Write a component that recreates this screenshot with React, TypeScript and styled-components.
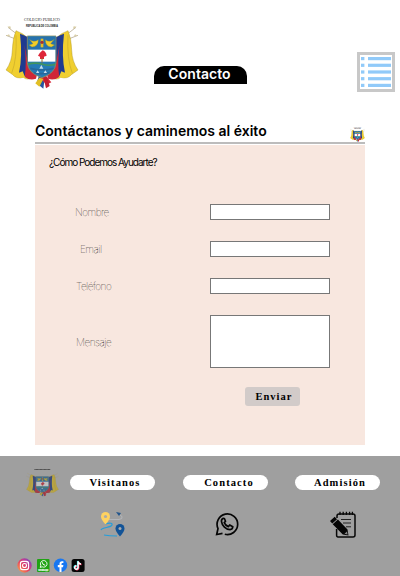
import React from 'react';
import styled, { createGlobalStyle } from 'styled-components';

const GlobalStyle = createGlobalStyle`
  * { box-sizing: border-box; }
  body { margin: 0; background: #fff; font-family: Inter, sans-serif; color: #000; }
`;

const Page = styled.div`
  width: 400px;
  height: 576px;
  display: flex;
  flex-direction: column;
  overflow: hidden;
`;

const Header = styled.header`
  height: 120px;
  display: flex;
  align-items: flex-start;
  padding: 16px 5px 0;
`;

const HeaderTab = styled.h1`
  width: 93px;
  height: 18px;
  margin: 50px 0 0 75px;
  background: #000;
  color: #fff;
  border-radius: 10px 10px 0 0;
  font-size: 14px;
  font-weight: 600;
  line-height: 16px;
  text-align: center;
  padding-right: 2px;
  letter-spacing: 0.05px;
`;

const MenuButton = styled.button`
  width: 38px;
  height: 40px;
  margin: 36px 0 0 auto;
  padding: 2px 1px;
  border: 3px solid #c8c8c8;
  background: #fff;
  display: flex;
`;

const Main = styled.main`
  width: 330px;
  margin: 0 35px;
  height: 336px;
`;

const TitleBar = styled.div`
  height: 24px;
  display: flex;
  align-items: flex-start;
  justify-content: space-between;
  border-bottom: 2px solid #bcbcbc;
`;

const Title = styled.h2`
  margin: 2px 0 0;
  font-size: 14px;
  line-height: 17px;
  font-weight: 600;
  white-space: nowrap;
`;

const TitleCrest = styled.div`
  display: flex;
  height: 15px;
  margin-top: 7px;
`;

const Panel = styled.form`
  height: 300px;
  margin-top: 1px;
  padding: 10px 35px 0 14px;
  background: #f8e7df;
`;

const Question = styled.p`
  margin: 0 0 32px;
  font-size: 10px;
  line-height: 15px;
  height: 17px;
  letter-spacing: -1px;
  white-space: nowrap;
`;

const Field = styled.label<{ $tall?: boolean }>`
  display: flex;
  align-items: center;
  justify-content: space-between;
  height: ${p => (p.$tall ? 53 : 16)}px;
  margin: ${p => (p.$tall ? '0' : '0 0 21px')};
`;

const FieldName = styled.span<{ $indent: number }>`
  margin-left: ${p => p.$indent}px;
  font-size: 10px;
  font-weight: 100;
  line-height: 12px;
  letter-spacing: -0.5px;
  color: #000;
`;

const Input = styled.input`
  width: 120px;
  height: 16px;
  border: 1px solid #777;
  background: #fff;
  padding: 0 3px;
`;

const TextArea = styled.textarea`
  width: 120px;
  height: 53px;
  border: 1px solid #777;
  background: #fff;
  resize: none;
  display: block;
`;

const SubmitButton = styled.button`
  display: block;
  width: 55px;
  height: 19px;
  margin: 19px 30px 0 auto;
  padding: 0 0 0 3px;
  border: 0;
  border-radius: 3px;
  background: #d2cbc9;
  color: #000;
  font: bold 10.5px/19px 'Liberation Serif', serif;
  letter-spacing: 1px;
`;

const Footer = styled.footer`
  height: 120px;
  background: #9f9f9f;
  padding: 13px 20px 0 26px;
`;

const FooterRow = styled.div`
  display: flex;
  align-items: flex-start;
  height: 76px;
`;

const FooterCrest = styled.div`
  display: flex;
  width: 44px;
  opacity: 0.75;
  filter: brightness(0.8);
`;

const Links = styled.nav`
  flex: 1;
  display: flex;
  justify-content: space-between;
  padding-top: 6px;
`;

const LinkGroup = styled.div`
  display: flex;
  flex-direction: column;
  align-items: center;
  gap: 20px;
`;

const Pill = styled.a<{ $offset?: number }>`
  width: 85px;
  height: 15px;
  padding-left: ${p => p.$offset ?? 5}px;
  border-radius: 8px;
  background: #fff;
  font: bold 10.5px/15px 'Liberation Serif', serif;
  letter-spacing: 1.1px;
  text-align: center;
`;

const IconSlot = styled.div<{ $shift: number }>`
  display: flex;
  align-items: center;
  justify-content: center;
  height: 28px;
  margin-left: ${p => p.$shift}px;
`;

const Social = styled.div`
  display: flex;
  gap: 3px;
  margin: 13px 0 0 -9px;
`;

function Crest({ width, height, caption = true }: { width: number; height: number; caption?: boolean }) {
  return (
    <svg width={width} height={height} viewBox="15 18 222 222" preserveAspectRatio="none">
      {caption ? (
        <g fontFamily="Liberation Serif, serif" textAnchor="middle" fill="#222">
          <text x="126" y="32" fontSize="12" textLength="108">COLEGIO PUBLICO</text>
          <text x="126" y="50" fontSize="12" fontFamily="Liberation Sans, sans-serif" fontWeight="bold" textLength="96" lengthAdjust="spacingAndGlyphs">REPUBLICA DE COLOMBIA</text>
        </g>
      ) : (
        <path d="M72 22h108" stroke="#333" strokeWidth="8" strokeDasharray="7 2" />
      )}
      <path d="M24 52L84 98M18 76L60 92M228 52L168 98M234 76L192 92" stroke="#b9ae94" strokeWidth="2.5" fill="none" />
      <path d="M18 77l9-4 3 5zM22 50l9-1 2 8zM234 77l-9-4-3 5zM230 50l-9-1-2 8z" fill="#d9cda4" />
      <path d="M48 62Q66 68 84 84L100 203Q80 212 70 202Q50 208 38 194L18 180Q36 155 37 120Q38 85 48 62z" fill="#f0cf30" stroke="#a58d25" strokeWidth="1.2" />
      <path d="M204 62Q186 68 168 84L152 203Q172 212 182 202Q202 208 214 194L234 180Q216 155 215 120Q214 85 204 62z" fill="#f0cf30" stroke="#a58d25" strokeWidth="1.2" />
      <path d="M48 76Q52 145 35 190M204 76Q200 145 217 190" stroke="#c9aa2b" strokeWidth="2" fill="none" />
      <path d="M60 71Q74 76 84 82L100 190 98 206Q74 205 57 188Q68 140 60 71zM192 71Q178 76 168 82L152 190 154 206Q178 205 195 188Q184 140 192 71z" fill="#1f3b90" />
      <path d="M73 104L84 160 112 190 108 206Q90 213 74 200Q81 160 73 104zM179 104L168 160 140 190 144 206Q162 213 178 200Q171 160 179 104z" fill="#cf2637" />
      <path d="M40 188Q58 190 68 184L75 201Q58 207 40 196zM212 188Q194 190 184 184L177 201Q194 207 212 196z" fill="#f0cf30" />
      <path d="M118 193L110 220 130 236 135 197z" fill="#2755a1" />
      <path d="M134 193L154 217 140 224 120 204z" fill="#d92839" />
      <path d="M130 201L138 235 149 228 141 200z" fill="#c31f30" />
      <path d="M118 203l-12 17 12 10 12-23z" fill="#e2bf24" />
      <path d="M82 78H168V158Q166 190 126 203Q84 190 82 158z" fill="#267bb6" stroke="#8b9261" strokeWidth="2.5" />
      <path d="M84 80H166V118H84z" fill="#2672ad" />
      <path d="M88 88Q101 99 115 89Q115 109 96 111L87 105 99 101zM163 88Q150 99 136 89Q136 109 154 111L164 105 152 101z" fill="#f1cd28" stroke="#8c8b37" />
      <path d="M126 86v26" stroke="#e5bd26" strokeWidth="8" />
      <circle cx="126" cy="97" r="5" fill="#a83232" />
      <path d="M84 119H166V155H84z" fill="#fff" />
      <path d="M128 121Q138 125 140 137L132 140V147H120V140L114 137Q119 128 128 121z" fill="#de2639" />
      <path d="M126 144v14" stroke="#93722c" strokeWidth="3" />
      <path d="M84 160Q105 153 126 160T166 160V166Q147 171 126 165T84 166z" fill="#42945d" />
      <path d="M91 175Q126 185 161 175M101 188Q126 194 149 188" stroke="#28689b" strokeWidth="5" fill="none" />
      <path d="M124 165l6 11h-12zM113 181l5 8h-10zM136 181l5 8h-10z" fill="#c6dfec" />
    </svg>
  );
}

function ListIcon() {
  return (
    <svg width="30" height="30" viewBox="0 0 30 30">
      {[0, 6.7, 13.4, 20.1, 26.8].map(y => (
        <g key={y} fill="#91caf9">
          <rect x="0" y={y} width="3.4" height="3.2" />
          <rect x="7" y={y} width="23" height="3.2" />
        </g>
      ))}
    </svg>
  );
}

function RouteIcon() {
  return (
    <svg width="26" height="26" viewBox="0 0 26 26" fill="none">
      <path d="M7 8.5H19Q23 8 22 5.5L20 4" stroke="#bbc0c5" strokeWidth=".7" />
      <path d="M5 13Q13 11 12 14C11 17 2 16 1 19M4 24Q9 25 17 25" stroke="#249edb" strokeWidth="1.2" />
      <path d="M5.5 13.5Q1 8.5 1 5.5a4.5 4.5 0 019 0q0 3-4.5 8z" fill="#ffd260" />
      <circle cx="5.5" cy="5.5" r="1.6" fill="#aaa" />
      <path d="M20 25.5Q15.5 20.5 15.5 17.5a4.5 4.5 0 019 0q0 3-4.5 8z" fill="#125397" />
      <circle cx="20" cy="17.5" r="1.5" fill="#aaa" />
      <path d="M16 1l5 1-2 3z" fill="#22558c" />
    </svg>
  );
}

function ChatIcon() {
  return (
    <svg width="24" height="24" viewBox="0 0 24 24" fill="none" stroke="#050505" strokeWidth="1.7">
      <path d="M9.8 22.2A10.3 10.3 0 103 16.5L1.7 22.5 7.5 21.4" />
      <path d="M8.2 6.4Q6.2 7.2 6.5 9.6C7 13.6 11 17.5 15 17.6Q17.6 17.5 17.8 14.8L14.7 13 13.3 14.6Q10.5 13.5 9.2 10.6L10.5 9.3 9.4 6.5z" strokeLinejoin="round" />
    </svg>
  );
}

function NotepadIcon() {
  return (
    <svg width="26" height="27" viewBox="0 0 26 27">
      <path d="M7 7V5Q7 3 9 3H23Q25 3 25 5V24Q25 26 23 26H8Q6.6 26 6.6 24V18" fill="none" stroke="#080808" strokeWidth="1.5" />
      <path d="M10 .8V4M13.2 .8V4M16.4 .8V4M19.6 .8V4M22.4 .8V4" stroke="#080808" strokeWidth="1.3" />
      <path d="M11 8.5H21M13 12H21M16 15.8H21" stroke="#222" strokeWidth="1" />
      <path d="M0 10L4.7 5.7 7 8.2 2.3 12.6zM2.7 13.3L7.9 8.5 17.5 18.5 18.5 24.5 12.8 23.5z" fill="#050505" />
      <path d="M14.5 22.8L17 20.5 17.6 23.6z" fill="#888" />
    </svg>
  );
}

function InstagramIcon() {
  return (
    <svg width="15" height="15" viewBox="0 0 15 15">
      <defs>
        <linearGradient id="insta" x1="0" y1="1" x2="1" y2="0">
          <stop stopColor="#fdb447" /><stop offset=".45" stopColor="#e6455f" /><stop offset=".7" stopColor="#b93b9a" /><stop offset="1" stopColor="#5457ce" />
        </linearGradient>
      </defs>
      <circle cx="7.5" cy="7.5" r="7.2" fill="url(#insta)" />
      <rect x="3.4" y="3.4" width="8.2" height="8.2" rx="2.3" fill="none" stroke="#fff" strokeWidth="1.1" />
      <circle cx="7.5" cy="7.5" r="2" fill="none" stroke="#fff" strokeWidth="1.1" />
      <circle cx="10" cy="5" r=".6" fill="#fff" />
    </svg>
  );
}

function WhatsAppBadge() {
  return (
    <svg width="15" height="15" viewBox="0 0 15 15">
      <rect x="2" y="1" width="12.5" height="13" rx="1" fill="#20a313" />
      <path d="M5.2 9.4l.6-2A3.3 3.3 0 117.2 8.8z" fill="none" stroke="#fff" strokeWidth=".9" />
      <path d="M7.3 4.3q0 2.7 3 3" fill="none" stroke="#fff" />
      <text x="8.2" y="12.6" fontSize="2.7" fontFamily="Inter, sans-serif" fontWeight="700" fill="#fff" textAnchor="middle" textLength="10.5">WhatsApp</text>
    </svg>
  );
}

function FacebookIcon() {
  return (
    <svg width="15" height="15" viewBox="-0.5 0 15 15">
      <circle cx="7" cy="7.2" r="6.7" fill="#1877f2" />
      <path d="M6 14V9.2H4.3V7.1H6V5.7Q6 3.2 8.5 3.2h1.4v1.9h-1Q8 5.1 8 6v1.1h1.9l-.4 2.1H8V14z" fill="#fff" />
    </svg>
  );
}

function TikTokIcon() {
  const note = 'M7.1 3.3V9.5A1.7 1.7 0 115.5 7.8M7.1 3.3Q7.4 5.7 10 6';
  return (
    <svg width="14" height="15" viewBox="0 0 14 15" fill="none" strokeWidth="1.4">
      <rect x=".6" y="1" width="13" height="13" rx="2.5" fill="#050505" />
      <path d={note} stroke="#25e8e8" transform="translate(-.5 -.4)" />
      <path d={note} stroke="#fa315d" transform="translate(.6 .5)" />
      <path d={note} stroke="#fff" />
    </svg>
  );
}

export default function App() {
  return (
    <>
      <GlobalStyle />
      <Page>
        <Header>
          <Crest width={74} height={74} />
          <HeaderTab>Contacto</HeaderTab>
          <MenuButton type="button" aria-label="Menú"><ListIcon /></MenuButton>
        </Header>
        <Main>
          <TitleBar>
            <Title>Contáctanos y caminemos al éxito</Title>
            <TitleCrest><Crest width={15} height={15} /></TitleCrest>
          </TitleBar>
          <Panel>
            <Question>¿Cómo Podemos Ayudarte?</Question>
            <Field><FieldName $indent={26}>Nombre</FieldName><Input /></Field>
            <Field><FieldName $indent={31}>Email</FieldName><Input /></Field>
            <Field><FieldName $indent={27}>Teléfono</FieldName><Input /></Field>
            <Field $tall><FieldName $indent={27}>Mensaje</FieldName><TextArea /></Field>
            <SubmitButton type="button">Enviar</SubmitButton>
          </Panel>
        </Main>
        <Footer>
          <FooterRow>
            <FooterCrest><Crest width={33} height={28} caption={false} /></FooterCrest>
            <Links>
              <LinkGroup><Pill>Visitanos</Pill><IconSlot $shift={0}><RouteIcon /></IconSlot></LinkGroup>
              <LinkGroup><Pill $offset={8}>Contacto</Pill><IconSlot $shift={4}><ChatIcon /></IconSlot></LinkGroup>
              <LinkGroup><Pill>Admisión</Pill><IconSlot $shift={11}><NotepadIcon /></IconSlot></LinkGroup>
            </Links>
          </FooterRow>
          <Social><InstagramIcon /><WhatsAppBadge /><FacebookIcon /><TikTokIcon /></Social>
        </Footer>
      </Page>
    </>
  );
}
